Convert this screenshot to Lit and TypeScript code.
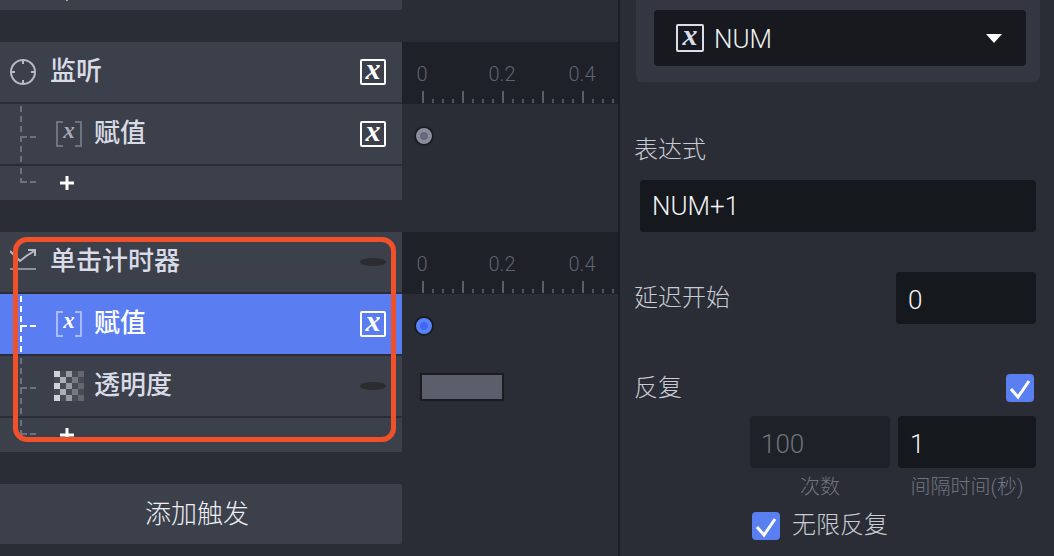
import { LitElement, html, css, svg } from "lit";
import { customElement } from "lit/decorators.js";

const dash = (x1: number, y1: number, x2: number, y2: number) =>
  svg`<line x1=${x1} y1=${y1} x2=${x2} y2=${y2} stroke="currentColor" stroke-width="2" stroke-dasharray="6 4"></line>`;

const tree = (h: number, branchY: number, end: boolean) => html`<svg class="tree" width="40" height=${h} viewBox="0 0 40 ${h}">
  ${dash(21, 2, 21, end ? branchY : h)}
  ${svg`<line x1="20" y1=${branchY} x2="27" y2=${branchY} stroke="currentColor" stroke-width="2"></line>`}
  ${svg`<line x1="30" y1=${branchY} x2="36" y2=${branchY} stroke="currentColor" stroke-width="2"></line>`}
</svg>`;

const xbox = () => html`<span class="xbox"><i>x</i></span>`;
const bracket = () => html`<span class="bracket">
  <svg width="26" height="26" viewBox="0 0 26 26"><path d="M7 1H1V25H7M19 1H25V25H19" fill="none" stroke="currentColor" stroke-width="2"></path></svg>
  <i>x</i></span>`;
const oval = () => html`<span class="oval"></span>`;

const checker = () => {
  const rects = [];
  const op = [0.82, 0.62, 0.5, 0.32, 0.22];
  for (let r = 0; r < 5; r++) {
    for (let c = 0; c < 5; c++) {
      const on = (r + c) % 2 === 0;
      rects.push(svg`<rect x=${c * 6} y=${r * 6} width="6" height="6" fill="#f2f3f6" opacity=${on ? op[c] : 0.07}></rect>`);
    }
  }
  return html`<svg class="checker" width="30" height="30" viewBox="0 0 30 30">${rects}</svg>`;
};

const check = () => html`<span class="check"><svg width="28" height="28" viewBox="0 0 28 28"><path d="M5 15L12 23L23 7" fill="none" stroke="#fff" stroke-width="3"></path></svg></span>`;

const ruler = () => html`<div class="ruler">
  <div class="labels"><span>0</span><span>0.2</span><span>0.4</span></div>
  <div class="ticks"></div>
</div>`;

const plus = () => html`<svg class="plus" viewBox="0 0 14 14"><path d="M7 0V14M0 7H14" stroke="#fff" stroke-width="3"></path></svg>`;

@customElement("app-root")
export class AppRoot extends LitElement {
  static styles = css`
    :host { display: block; width: 1054px; height: 556px; overflow: hidden; position: relative; background: #2a2d36; font-family: Roboto, "Noto Sans CJK SC", sans-serif; color: #fff; }
    * { box-sizing: border-box; }
    .page { display: grid; grid-template-columns: 402px 216px 2px 434px; height: 556px; }
    .left { display: flex; flex-direction: column; }
    .stubrow { height: 10px; background: #3c404b; margin-bottom: 32px; }
    .stubrow b { display: block; width: 2px; height: 1px; margin-left: 66px; background: #aaa; }
    .group { display: flex; flex-direction: column; gap: 2px; margin-bottom: 32px; }
    .row { position: relative; display: flex; align-items: center; background: #3c404b; height: 60px; padding-right: 16px; font-size: 26px; font-weight: 500; color: #d9dce7; }
    .row.head { padding-left: 10px; gap: 14px; }
    .row.child { padding-left: 56px; gap: 12px; }
    .row.child.op { padding-left: 54px; gap: 10px; }
    .row.sel { background: #5a7ef2; color: #fff; }
    .row.sel .bracket { color: #a9bcf8; }
    .row.sel .bracket i { color: #fff; }
    .row.add { height: 34px; padding-left: 60px; }
    .row .label { flex: 1; line-height: 36px; transform: translateY(-1px); }
    .tree { position: absolute; left: 0; top: 0; color: #6d717b; }
    .sel .tree { color: #fff; }
    .xbox { width: 26px; height: 26px; border: 2px solid #fff; border-radius: 2px; display: flex; align-items: center; justify-content: center; flex: none; color: #fff; }
    .xbox i, .bracket i { font-family: "Liberation Serif", serif; font-style: italic; font-weight: 700; line-height: 1; }
    .xbox i { font-size: 30px; transform: translateY(-3px); }
    .bracket { position: relative; width: 26px; height: 26px; flex: none; color: #6f737d; display: flex; align-items: center; justify-content: center; }
    .bracket svg { position: absolute; inset: 0; }
    .bracket i { font-size: 23px; color: #a6a9b3; transform: translateY(-4px); }
    .oval { width: 26px; height: 8px; border-radius: 50%; background: #2b2c30; flex: none; }
    .checker { flex: none; }
    .plus { width: 14px; height: 14px; flex: none; }
    .button { height: 60px; background: #3c404b; display: flex; align-items: center; justify-content: center; padding: 0 8px 6px 0; font-size: 26px; font-weight: 300; color: #eceef3; border-radius: 0 2px 2px 0; }
    .timeline { display: flex; flex-direction: column; padding-top: 42px; overflow: hidden; }
    .tgroup { display: flex; flex-direction: column; margin-bottom: 32px; }
    .ruler { height: 62px; background: #1e2128; display: flex; flex-direction: column; justify-content: flex-end; flex: none; }
    .labels { display: flex; gap: 40px; font-size: 20px; font-weight: 300; color: #5e6272; height: 24px; line-height: 24px; margin-bottom: 5px; text-align: center; white-space: nowrap; }
    .labels span { width: 40px; flex: none; }
    .ticks { height: 12px; margin: 0 0 1px 20px; background-image:
        linear-gradient(to right, #5a5e68 0 2px, transparent 2px),
        linear-gradient(to right, #4f535d 0 2px, transparent 2px);
      background-size: 40px 12px, 10px 4px;
      background-position: 0 0, 0 100%;
      background-repeat: repeat-x; }
    .track { height: 62px; display: flex; align-items: center; padding-left: 12px; flex: none; }
    .track.short { height: 34px; }
    .dot { width: 20px; height: 20px; border-radius: 50%; background: #8a8e9c; border: 2px solid #1a1c22; display: flex; align-items: center; justify-content: center; transform: translateY(1px); }
    .dot::after { content: ""; width: 8px; height: 8px; border-radius: 50%; background: #666a7a; }
    .dot.on { background: #5a82fb; }
    .dot.on::after { background: #3f68ee; }
    .bar { width: 84px; height: 28px; background: #5a5f6b; border: 2px solid #1a1c22; margin-left: 6px; }
    .divider { background: #1c1e24; }
    .right { display: flex; flex-direction: column; font-size: 24px; font-weight: 300; color: #c9ccd4; }
    .card { height: 82px; margin: 0 14px 0 16px; background: #343741; border-radius: 0 0 6px 6px; padding: 10px 14px 0 18px; }
    .select { height: 56px; background: #17191e; border-radius: 4px; display: flex; align-items: center; padding: 0 24px 0 22px; gap: 10px; font-size: 26px; color: #eef0f4; }
    .select .xbox { width: 28px; height: 28px; border-color: #d9dee9; color: #d9dee9; }
    .select span.name { flex: 1; transform: translateY(1px); }
    .tri { width: 0; height: 0; border-left: 8px solid transparent; border-right: 8px solid transparent; border-top: 9px solid #fff; }
    .lab { line-height: 36px; height: 36px; margin-left: 14px; }
    .input { height: 52px; background: #15181c; border-radius: 4px; display: flex; align-items: center; padding-left: 12px; font-size: 26px; color: #f2f3f6; }
    .input.num { padding-bottom: 0; padding-top: 3px; }
    .input.dim { background: #1e2128; color: #6f7278; padding-left: 11px; }
    .expr { margin: 12px 18px 0 20px; }
    .line { display: flex; align-items: center; justify-content: space-between; padding: 0 18px 0 14px; }
    .line .input { width: 140px; }
    .line span.t { transform: translateY(-3px); }
    .delay { margin-top: 40px; }
    .repeat { margin-top: 50px; height: 28px; padding-right: 20px; }
    .check { width: 28px; height: 28px; background: #5a7ff0; border-radius: 4px; display: block; flex: none; }
    .check svg { display: block; }
    .pair { display: grid; grid-template-columns: 140px 138px; column-gap: 8px; margin: 14px 0 0 130px; }
    .sub { font-size: 20px; color: #71747f; text-align: center; line-height: 38px; height: 38px; white-space: nowrap; }
    .infinite { display: flex; align-items: center; gap: 12px; margin: 6px 0 0 132px; line-height: 28px; height: 28px; }
    .infinite span.t { transform: translateY(-1px); }
    .lab.first { margin-top: 50px; }
    .focus { position: absolute; left: 13px; top: 237px; width: 383px; height: 205px; border: 5px solid #f0512a; border-radius: 14px; pointer-events: none; }
  `;

  render() {
    return html`<div class="page">
      <div class="left">
        <div class="stubrow"><b></b></div>
        <div class="group">
          <div class="row head">
            <svg width="26" height="26" viewBox="0 0 26 26" fill="none" stroke="#b6bac4" stroke-width="2"><circle cx="13" cy="13" r="12"></circle><path d="M13 1V5M13 21V25M1 13H5M21 13H25"></path></svg>
            <span class="label">监听</span>${xbox()}
          </div>
          <div class="row child">${tree(60, 33, false)}${bracket()}<span class="label">赋值</span>${xbox()}</div>
          <div class="row add">${tree(34, 16, true)}${plus()}</div>
        </div>
        <div class="group">
          <div class="row head">
            <svg width="26" height="26" viewBox="0 0 26 26" fill="none" stroke="#b6bac4" stroke-width="2"><path d="M0 2L10 12L17 6.5L25 1.5M18 1H25V7"></path><path d="M0 20H26" stroke="#8e919c"></path></svg>
            <span class="label">单击计时器</span>${oval()}
          </div>
          <div class="row child sel">${tree(60, 32, false)}${bracket()}<span class="label">赋值</span>${xbox()}</div>
          <div class="row child op">${tree(60, 32, false)}${checker()}<span class="label">透明度</span>${oval()}</div>
          <div class="row add">${tree(34, 16, true)}${plus()}</div>
        </div>
        <div class="button">添加触发</div>
      </div>

      <div class="timeline">
        <div class="tgroup">
          ${ruler()}
          <div class="track"><span class="dot"></span></div>
          <div class="track short"></div>
        </div>
        <div class="tgroup">
          ${ruler()}
          <div class="track"><span class="dot on"></span></div>
          <div class="track"><span class="bar"></span></div>
          <div class="track short"></div>
        </div>
      </div>

      <div class="divider"></div>

      <div class="right">
        <div class="card">
          <div class="select">${xbox()}<span class="name">NUM</span><span class="tri"></span></div>
        </div>
        <div class="lab first">表达式</div>
        <div class="input expr">NUM+1</div>
        <div class="line delay"><span class="t">延迟开始</span><div class="input num">0</div></div>
        <div class="line repeat"><span class="t">反复</span>${check()}</div>
        <div class="pair">
          <div class="input num dim">100</div><div class="input num">1</div>
          <div class="sub">次数</div><div class="sub">间隔时间(秒)</div>
        </div>
        <div class="infinite">${check()}<span class="t">无限反复</span></div>
      </div>
    </div>
    <div class="focus"></div>`;
  }
}
